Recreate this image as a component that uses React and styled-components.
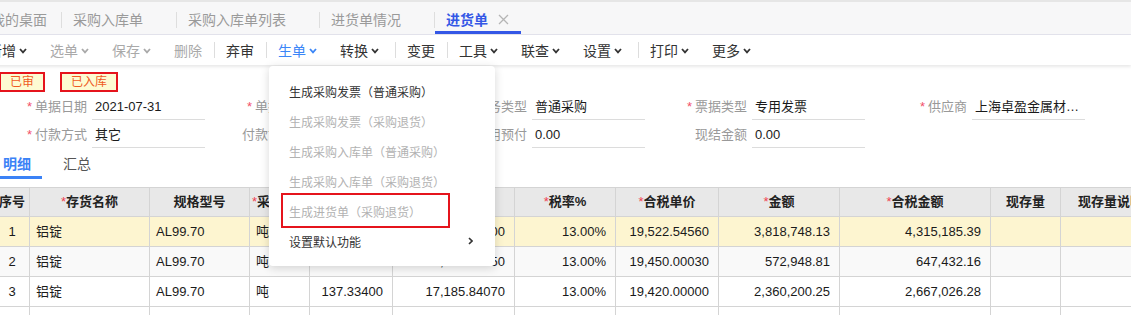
import React from 'react'
import styled, { createGlobalStyle } from 'styled-components'

const GlobalStyle = createGlobalStyle`
  html, body {
    margin: 0;
    padding: 0;
    background: #fff;
  }
  body {
    font-family: "Liberation Sans", "Noto Sans CJK SC", sans-serif;
    color: #333;
  }
`

const Page = styled.div`
  width: 1131px;
  height: 315px;
  overflow: hidden;
  position: relative;
`

/* ---------- top tabs ---------- */

const TabBar = styled.div`
  display: flex;
  align-items: stretch;
  height: 35px;
  box-sizing: border-box;
  margin-left: -20px;
  background: #f7f7f8;
  border-top: 2px solid #e6e6e6;
  border-bottom: 1px solid #e3e3ec;
`

const Tab = styled.div`
  display: flex;
  align-items: center;
  box-sizing: border-box;
  padding: 5px ${({ $home }) => ($home ? 14 : 12)}px 0 11px;
  border-bottom: 3px solid ${({ $active }) => ($active ? '#3457e6' : 'transparent')};
  font-size: 14px;
  white-space: nowrap;
  color: ${({ $active }) => ($active ? '#3457e6' : '#9a9a9a')};
  font-weight: ${({ $active }) => ($active ? 700 : 400)};
`

const TabClose = styled.span`
  display: flex;
  width: 11px;
  height: 11px;
  margin-left: 10px;
  visibility: ${({ $show }) => ($show ? 'visible' : 'hidden')};
`

const TabDivider = styled.span`
  width: 1px;
  height: 16px;
  align-self: center;
  margin-top: 3px;
  background: #dedede;
`

/* ---------- toolbar ---------- */

const Toolbar = styled.div`
  position: relative;
  z-index: 5;
  display: flex;
  align-items: center;
  height: 30px;
  margin-left: -23.5px;
  background: #fff;
  box-shadow: 0 2px 3px rgba(0, 0, 0, 0.09);
`

const ToolItem = styled.div`
  position: relative;
  display: flex;
  align-items: center;
  height: 100%;
  padding: 0 11.5px;
  font-size: 14px;
  white-space: nowrap;
  color: ${({ $tone }) =>
    $tone === 'off' ? '#a9a9a9' : $tone === 'on' ? '#3b86f7' : '#333'};
`

const ToolSep = styled.span`
  width: 1px;
  height: 16px;
  margin-left: ${({ $wide }) => ($wide ? 4 : 0)}px;
  background: #dddddd;
`

const Chevron = styled.svg`
  width: 8px;
  height: 6px;
  margin-left: 3px;
  margin-top: 1px;
`

/* ---------- dropdown ---------- */

const Menu = styled.div`
  position: absolute;
  top: calc(100% + 1px);
  left: 2.5px;
  width: 226px;
  padding: 10px 0;
  box-sizing: border-box;
  background: #fff;
  border-radius: 4px;
  box-shadow: 0 2px 10px rgba(0, 0, 0, 0.16);
`

const MenuItem = styled.div`
  position: relative;
  display: flex;
  align-items: center;
  justify-content: space-between;
  height: 30px;
  padding: 0 22px 0 20px;
  font-size: 12px;
  color: ${({ $disabled }) => ($disabled ? '#b2b2b2' : '#333')};
`

const Highlight = styled.span`
  position: absolute;
  left: 12px;
  top: -3px;
  width: 169px;
  height: 35px;
  box-sizing: border-box;
  border: 2px solid #e5141c;
`

/* ---------- status + form ---------- */

const StatusRow = styled.div`
  display: flex;
  gap: 15px;
  padding-top: 7px;
  margin-left: -1px;
`

const StatusTag = styled.span`
  height: 20px;
  box-sizing: border-box;
  padding: 0 9px;
  border: 2px solid #e5141c;
  background: #fdfbd2;
  color: #ef5a22;
  font-size: 12px;
  line-height: 16px;
`

const Form = styled.div`
  display: grid;
  grid-template-columns: repeat(5, 220px);
  grid-auto-rows: 28px;
  margin-left: 2px;
`

const Field = styled.div`
  display: flex;
`

const Label = styled.div`
  width: 90px;
  height: 28px;
  box-sizing: border-box;
  padding: 3px 5px 0 0;
  text-align: right;
  font-size: 13px;
  line-height: 24px;
  color: #999;
  white-space: nowrap;
`

const Req = styled.span`
  color: #f2506a;
  margin-right: 3px;
`

const Value = styled.div`
  width: 113px;
  height: 28px;
  box-sizing: border-box;
  padding: 3px 5px 0 3px;
  border-bottom: 1px solid #dcdcdc;
  font-size: 13px;
  line-height: 24px;
  color: #1a1a1a;
  white-space: nowrap;
  overflow: hidden;
  text-overflow: ellipsis;
`

/* ---------- detail tabs ---------- */

const DetailTabs = styled.div`
  display: flex;
  gap: 10px;
  height: 31px;
  margin-left: -8px;
`

const DetailTab = styled.div`
  display: flex;
  align-items: center;
  box-sizing: border-box;
  padding: 2px 11px 0;
  border-bottom: 3px solid ${({ $active }) => ($active ? '#3b82f6' : 'transparent')};
  font-size: 14px;
  font-weight: ${({ $active }) => ($active ? 700 : 400)};
  color: ${({ $active }) => ($active ? '#3b82f6' : '#555')};
`

/* ---------- grid table ---------- */

const Table = styled.div`
  margin-top: 8px;
  margin-left: -5px;
  border-top: 1px solid #d4d4d4;
`

const Row = styled.div`
  display: flex;
  height: ${({ $head }) => ($head ? 29 : 30)}px;
  background: ${({ $bg }) => $bg};
`

const Cell = styled.div`
  flex-shrink: 0;
  width: ${({ $w }) => $w}px;
  box-sizing: border-box;
  padding: ${({ $align }) => ($align === 'right' ? '0 9px 0 4px' : '0 6px')};
  border-right: 1px solid #d4d4d4;
  border-bottom: 1px solid #d4d4d4;
  font-size: 13px;
  line-height: 29px;
  text-align: ${({ $align }) => $align};
  color: #1a1a1a;
  white-space: nowrap;
  overflow: hidden;
`

const HeadCell = styled(Cell)`
  padding: 0 2px;
  line-height: 28px;
  text-align: center;
  font-weight: 700;
  color: #222;
`

const Star = styled.span`
  color: #f04050;
  font-weight: 400;
`

const columns = [
  { key: 'no', title: '序号', w: 35, align: 'center' },
  { key: 'name', title: '存货名称', w: 120, align: 'left', req: true },
  { key: 'spec', title: '规格型号', w: 100, align: 'left' },
  { key: 'unit', title: '采购单位', w: 60, align: 'left', req: true },
  { key: 'qty', title: '数量', w: 83, align: 'right', req: true },
  { key: 'price', title: '无税单价', w: 122, align: 'right', req: true },
  { key: 'rate', title: '税率%', w: 101, align: 'right', req: true },
  { key: 'taxPrice', title: '合税单价', w: 103, align: 'right', req: true },
  { key: 'amount', title: '金额', w: 121, align: 'right', req: true },
  { key: 'taxAmount', title: '合税金额', w: 151, align: 'right', req: true },
  { key: 'stock', title: '现存量', w: 70, align: 'right' },
  { key: 'stockNote', title: '现存量说明', w: 100, align: 'left' },
]

const rows = [
  { no: '1', name: '铝锭', spec: 'AL99.70', unit: '吨', qty: '221.03900', price: '17,276.58800', rate: '13.00%', taxPrice: '19,522.54560', amount: '3,818,748.13', taxAmount: '4,315,185.39', bg: '#fdf5d0' },
  { no: '2', name: '铝锭', spec: 'AL99.70', unit: '吨', qty: '33.28700', price: '17,212.38950', rate: '13.00%', taxPrice: '19,450.00030', amount: '572,948.81', taxAmount: '647,432.16', bg: '#f9f9f9' },
  { no: '3', name: '铝锭', spec: 'AL99.70', unit: '吨', qty: '137.33400', price: '17,185.84070', rate: '13.00%', taxPrice: '19,420.00000', amount: '2,360,200.25', taxAmount: '2,667,026.28', bg: '#fff' },
  { no: '', bg: '#fff' },
]

const tools = [
  { t: '新增', dd: true },
  { t: '选单', dd: true, tone: 'off' },
  { t: '保存', dd: true, tone: 'off' },
  { t: '删除', tone: 'off' },
  'sep',
  { t: '弃审' },
  'sep',
  { t: '生单', dd: true, tone: 'on', menu: true },
  { t: '转换', dd: true },
  'sep',
  { t: '变更' },
  'sep',
  { t: '工具', dd: true },
  { t: '联查', dd: true },
  { t: '设置', dd: true },
  'sep',
  { t: '打印', dd: true },
  { t: '更多', dd: true },
]

const menuItems = [
  { t: '生成采购发票（普通采购）' },
  { t: '生成采购发票（采购退货）', disabled: true },
  { t: '生成采购入库单（普通采购）', disabled: true },
  { t: '生成采购入库单（采购退货）', disabled: true },
  { t: '生成进货单（采购退货）', disabled: true, mark: true },
  { t: '设置默认功能', sub: true },
]

const fields = [
  { label: '单据日期', value: '2021-07-31', req: true },
  { label: '单据编号', value: 'JH20210731001', req: true },
  { label: '业务类型', value: '普通采购', req: true },
  { label: '票据类型', value: '专用发票', req: true },
  { label: '供应商', value: '上海卓盈金属材料有限公司', req: true },
  { label: '付款方式', value: '其它', req: true },
  { label: '付款协议号', value: '' },
  { label: '使用预付', value: '0.00' },
  { label: '现结金额', value: '0.00' },
  null,
]

const Down = () => (
  <Chevron viewBox="0 0 8 6">
    <polyline points="1,1 4,4.3 7,1" fill="none" stroke="currentColor" strokeWidth="1.8" />
  </Chevron>
)

const App = () => {
  return (
    <Page>
      <GlobalStyle />
      <TabBar>
        <Tab $home>我的桌面</Tab>
        <TabDivider />
        {['采购入库单', '采购入库单列表', '进货单情况'].map((t) => (
          <React.Fragment key={t}>
            <Tab>
              {t}
              <TabClose />
            </Tab>
            <TabDivider />
          </React.Fragment>
        ))}
        <Tab $active>
          进货单
          <TabClose $show>
            <svg width="11" height="11" viewBox="0 0 11 11">
              <path d="M1 1 L10 10 M10 1 L1 10" stroke="#b5b5b5" strokeWidth="1.3" />
            </svg>
          </TabClose>
        </Tab>
      </TabBar>

      <Toolbar>
        {tools.map((it, i) =>
          it === 'sep' ? (
            <ToolSep key={i} $wide={tools[i - 1] && tools[i - 1].dd} />
          ) : (
            <ToolItem key={i} $tone={it.tone}>
              {it.t}
              {it.dd && <Down />}
              {it.menu && (
                <Menu>
                  {menuItems.map((m) => (
                    <MenuItem key={m.t} $disabled={m.disabled}>
                      {m.t}
                      {m.mark && <Highlight />}
                      {m.sub && (
                        <svg width="5" height="8" viewBox="0 0 5 8">
                          <polyline points="1,1 4,4 1,7" fill="none" stroke="#333" strokeWidth="1.6" />
                        </svg>
                      )}
                    </MenuItem>
                  ))}
                </Menu>
              )}
            </ToolItem>
          )
        )}
      </Toolbar>

      <StatusRow>
        <StatusTag>已审</StatusTag>
        <StatusTag>已入库</StatusTag>
      </StatusRow>

      <Form>
        {fields.map((f, i) =>
          f ? (
            <Field key={i}>
              <Label>
                {f.req && <Req>*</Req>}
                {f.label}
              </Label>
              <Value>{f.value}</Value>
            </Field>
          ) : (
            <div key={i} />
          )
        )}
      </Form>

      <DetailTabs>
        <DetailTab $active>明细</DetailTab>
        <DetailTab>汇总</DetailTab>
      </DetailTabs>

      <Table>
        <Row $head $bg="#e8e8e8">
          {columns.map((c) => (
            <HeadCell key={c.key} $w={c.w}>
              {c.req && <Star>*</Star>}
              {c.title}
            </HeadCell>
          ))}
        </Row>
        {rows.map((r, i) => (
          <Row key={i} $bg={r.bg}>
            {columns.map((c) => (
              <Cell key={c.key} $w={c.w} $align={c.align}>
                {r[c.key] || ''}
              </Cell>
            ))}
          </Row>
        ))}
      </Table>
    </Page>
  )
}

export default App
